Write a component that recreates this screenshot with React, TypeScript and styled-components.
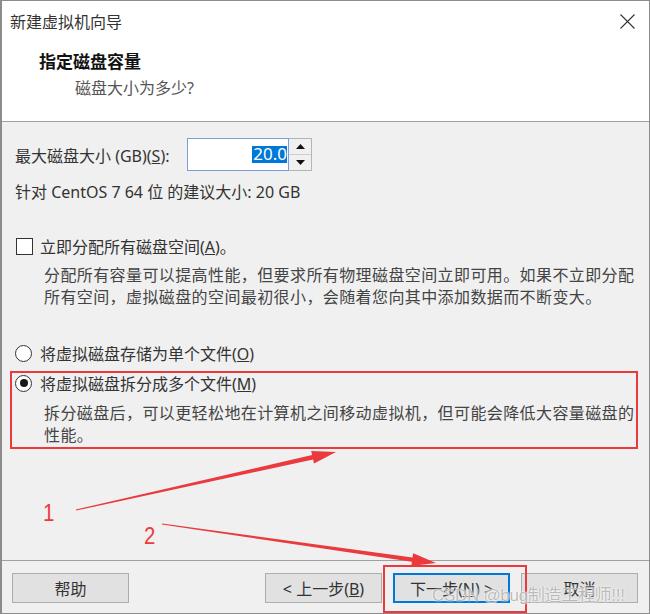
import React from 'react'
import styled, { createGlobalStyle } from 'styled-components'

const GlobalStyle = createGlobalStyle`
body {
    margin: 0;
    background: #ffffff;
}
* {
    box-sizing: border-box;
}
`

const FONT = `"Noto Sans", "Noto Sans CJK SC", sans-serif`
const RED = '#ea3a3d'

const Window = styled.div`
position: relative;
width: 650px;
height: 614px;
display: flex;
flex-direction: column;
border: 1px solid #8c8c8c;
border-left: 2px solid #8c8c8c;
font-family: ${FONT};
color: #222;
overflow: hidden;
`
const Header = styled.div`
height: 121px;
background: #ffffff;
border-bottom: 1px solid #a0a0a0;
`
const TitleBar = styled.div`
height: 40px;
display: flex;
align-items: center;
justify-content: space-between;
padding: 0 14px 0 8px;
font-size: 16px;
color: #333;
`
const Heading = styled.div`
margin-top: 9px;
padding-left: 37px;
font-size: 17px;
line-height: 24px;
font-weight: 700;
color: #111;
`
const SubHeading = styled.div`
margin-top: 2px;
padding-left: 73px;
font-size: 16px;
line-height: 24px;
color: #555;
`
const Body = styled.div`
flex: 1;
background: #f0f0f0;
padding: 16px 12px 0 13px;
display: flex;
flex-direction: column;
font-size: 16px;
`
const SizeRow = styled.div`
height: 33px;
display: flex;
align-items: center;
`
const SizeLabel = styled.span`
width: 172px;
color: #333;
`
const Spin = styled.div`
display: flex;
height: 33px;
`
const SpinInput = styled.div`
width: 102px;
height: 33px;
background: #fff;
border: 1px solid #7a9fd6;
display: flex;
align-items: center;
justify-content: flex-end;
padding-right: 1px;
`
const Selected = styled.span`
background: #0078d7;
color: #fff;
font-size: 17px;
line-height: 16px;
padding: 0 0 1px 1px;
`
const SpinButtons = styled.div`
width: 23px;
display: flex;
flex-direction: column;
border: 1px solid #b5b5b5;
border-left: none;
background: #f0f0f0;
`
const SpinHalf = styled.div<{ $top?: boolean }>`
flex: 1;
display: flex;
align-items: center;
justify-content: center;
border-bottom: ${p => (p.$top ? '1px solid #cfcfcf' : 'none')};
`
const Line = styled.div<{ $mt: number }>`
margin-top: ${p => p.$mt}px;
line-height: 22px;
color: #333;
`
const OptionRow = styled.div<{ $mt: number }>`
margin-top: ${p => p.$mt}px;
height: 22px;
display: flex;
align-items: center;
gap: 7px;
color: #333;
`
const CheckBox = styled.span`
width: 17px;
height: 17px;
border: 1px solid #333;
background: #fff;
margin-left: 1px;
`
const Radio = styled.span<{ $on?: boolean }>`
width: 17px;
height: 17px;
border-radius: 50%;
border: 1px solid #333;
background: #fff;
display: flex;
align-items: center;
justify-content: center;
margin-right: 1px;
&::after {
    content: '';
    width: 8px;
    height: 8px;
    border-radius: 50%;
    background: ${p => (p.$on ? '#1a1a1a' : 'transparent')};
}
`
const Desc = styled.div<{ $mt: number }>`
margin-top: ${p => p.$mt}px;
padding-left: 29px;
line-height: 22px;
letter-spacing: 0.4px;
color: #444;
`
const Footer = styled.div`
height: 53px;
background: #f0f0f0;
border-top: 1px solid #a0a0a0;
display: flex;
justify-content: space-between;
padding: 12px 11px 0 10px;
`
const ButtonGroup = styled.div`
display: flex;
gap: 11px;
`
const Button = styled.button<{ $primary?: boolean }>`
width: 117px;
height: 30px;
background: #e1e1e1;
border: ${p => (p.$primary ? '2px solid #0078d7' : '1px solid #adadad')};
font-family: ${FONT};
font-size: 16px;
color: #333;
padding: 0;
`
const Key = styled.span`
text-decoration: underline;
`
const RedBox = styled.div<{ $l: number; $t: number; $w: number; $h: number }>`
position: absolute;
left: ${p => p.$l}px;
top: ${p => p.$t}px;
width: ${p => p.$w}px;
height: ${p => p.$h}px;
border: 2px solid ${RED};
pointer-events: none;
`
const Overlay = styled.svg`
position: absolute;
left: -2px;
top: -1px;
pointer-events: none;
`
const Num = styled.span<{ $l: number; $t: number }>`
position: absolute;
left: ${p => p.$l}px;
top: ${p => p.$t}px;
font-family: "Liberation Sans", Arial, sans-serif;
font-size: 24px;
line-height: 24px;
color: ${RED};
transform: scaleX(0.85);
`
const Watermark = styled.span`
position: absolute;
left: 430px;
top: 580px;
font-family: "Liberation Sans", "Noto Sans CJK SC", sans-serif;
font-size: 17px;
letter-spacing: -0.3px;
color: rgba(120, 120, 120, 0.5);
text-shadow: 0 0 2px #fff, 0 0 1px #fff;
white-space: nowrap;
`

function arrow(sx: number, sy: number, tx: number, ty: number) {
    const len = Math.hypot(tx - sx, ty - sy)
    const dx = (tx - sx) / len
    const dy = (ty - sy) / len
    const nx = -dy
    const ny = dx
    const headLen = 24
    const bx = tx - dx * headLen
    const by = ty - dy * headLen
    const pts = [
        [sx + nx * 0.6, sy + ny * 0.6],
        [bx + nx * 2.2, by + ny * 2.2],
        [bx + nx * 6.5, by + ny * 6.5],
        [tx, ty],
        [bx - nx * 6.5, by - ny * 6.5],
        [bx - nx * 2.2, by - ny * 2.2],
        [sx - nx * 0.6, sy - ny * 0.6],
    ]
    return pts.map(p => p[0].toFixed(1) + ',' + p[1].toFixed(1)).join(' ')
}

function App() {
    return (
        <>
            <GlobalStyle />
            <Window>
                <Header>
                    <TitleBar>
                        <span>新建虚拟机向导</span>
                        <svg width="15" height="15" viewBox="0 0 15 15">
                            <path d="M0.5 0.5 L14.5 14.5 M14.5 0.5 L0.5 14.5" stroke="#333" strokeWidth="1.1" />
                        </svg>
                    </TitleBar>
                    <Heading>指定磁盘容量</Heading>
                    <SubHeading>磁盘大小为多少?</SubHeading>
                </Header>
                <Body>
                    <SizeRow>
                        <SizeLabel>最大磁盘大小 (GB)(<Key>S</Key>):</SizeLabel>
                        <Spin>
                            <SpinInput>
                                <Selected>20.0</Selected>
                            </SpinInput>
                            <SpinButtons>
                                <SpinHalf $top>
                                    <svg width="9" height="5" viewBox="0 0 9 5"><path d="M4.5 0 L9 5 L0 5 Z" fill="#111" /></svg>
                                </SpinHalf>
                                <SpinHalf>
                                    <svg width="9" height="5" viewBox="0 0 9 5"><path d="M0 0 L9 0 L4.5 5 Z" fill="#111" /></svg>
                                </SpinHalf>
                            </SpinButtons>
                        </Spin>
                    </SizeRow>
                    <Line $mt={10}>针对 CentOS 7 64 位 的建议大小: 20 GB</Line>

                    <OptionRow $mt={32}>
                        <CheckBox />
                        <span>立即分配所有磁盘空间(<Key>A</Key>)。</span>
                    </OptionRow>
                    <Desc $mt={7}>
                        分配所有容量可以提高性能，但要求所有物理磁盘空间立即可用。如果不立即分配<br />
                        所有空间，虚拟磁盘的空间最初很小，会随着您向其中添加数据而不断变大。
                    </Desc>

                    <OptionRow $mt={34}>
                        <Radio />
                        <span>将虚拟磁盘存储为单个文件(<Key>O</Key>)</span>
                    </OptionRow>
                    <OptionRow $mt={8}>
                        <Radio $on />
                        <span>将虚拟磁盘拆分成多个文件(<Key>M</Key>)</span>
                    </OptionRow>
                    <Desc $mt={8}>
                        拆分磁盘后，可以更轻松地在计算机之间移动虚拟机，但可能会降低大容量磁盘的<br />
                        性能。
                    </Desc>
                </Body>
                <Footer>
                    <Button>帮助</Button>
                    <ButtonGroup>
                        <Button>&lt; 上一步(<Key>B</Key>)</Button>
                        <Button $primary>下一步(<Key>N</Key>) &gt;</Button>
                        <Button>取消</Button>
                    </ButtonGroup>
                </Footer>

                <RedBox $l={8} $t={370} $w={628} $h={78} />
                <RedBox $l={381} $t={564} $w={144} $h={48} />
                <Overlay width="650" height="614" viewBox="0 0 650 614">
                    <polygon points={arrow(76, 510, 336, 452)} fill={RED} />
                    <polygon points={arrow(162, 524, 436, 563)} fill={RED} />
                </Overlay>
                <Num $l={40} $t={500}>1</Num>
                <Num $l={141} $t={523}>2</Num>
                <Watermark>CSDN @bug制造工程师!!!</Watermark>
            </Window>
        </>
    )
}

export default App
